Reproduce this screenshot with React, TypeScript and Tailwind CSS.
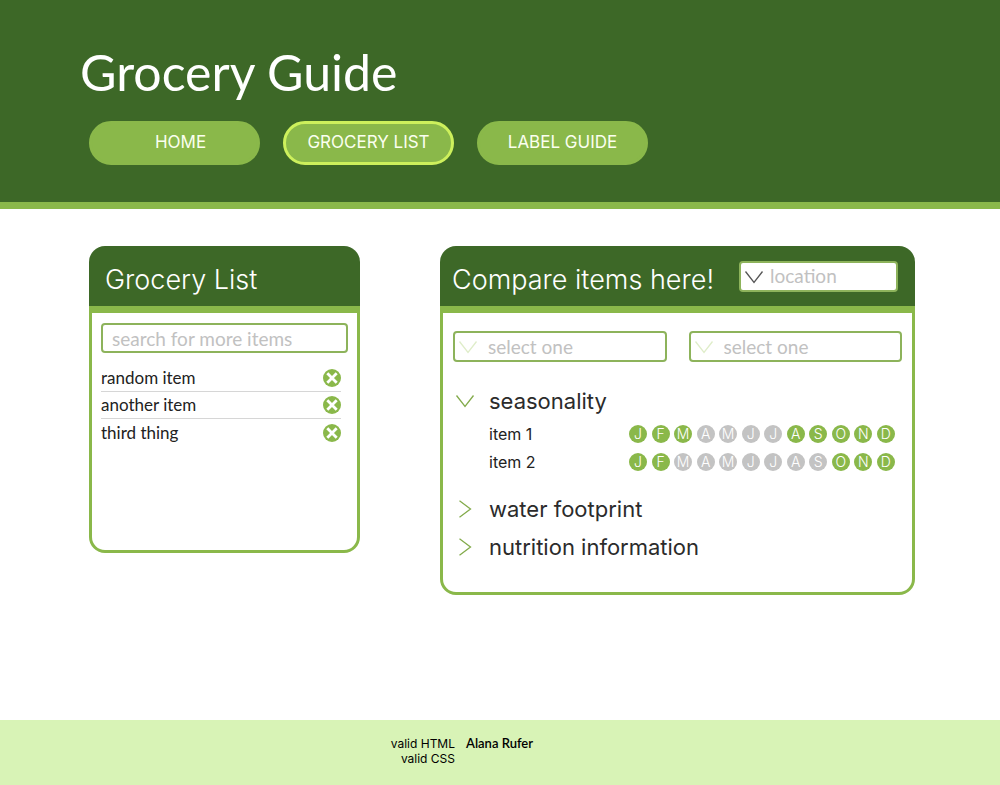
import { useState } from "react";

const INTER = "font-['Inter','Liberation_Sans',sans-serif]";

const MONTHS = ["J", "F", "M", "A", "M", "J", "J", "A", "S", "O", "N", "D"];

const SEASONS = [
  { name: "item 1", active: [0, 1, 2, 7, 8, 9, 10, 11] },
  { name: "item 2", active: [0, 1, 9, 10, 11] },
];

const NAV = [
  { label: "HOME", style: "border-[#8ab84a] pl-3" },
  { label: "GROCERY LIST", style: "border-[#cdf05c]" },
  { label: "LABEL GUIDE", style: "border-[#8ab84a]" },
];

function Chevron({ className, open = true }: { className: string; open?: boolean }) {
  return (
    <svg
      viewBox="0 0 20 20"
      aria-hidden="true"
      className={`size-5 shrink-0 ${className}`}
      fill="none"
      stroke="currentColor"
      strokeWidth="1.3"
    >
      <path d={open ? "M1.5 4.500 L10 15.500 L18.500 4.500" : "M4.500 1.800 L15.500 10 L4.500 18.200"} />
    </svg>
  );
}

function Picker({
  label,
  text,
  chevron,
  className,
}: {
  label: string;
  text: string;
  chevron: string;
  className: string;
}) {
  return (
    <div className={`relative ${className}`}>
      <select
        aria-label={label}
        className="block h-full w-full appearance-none rounded border-2 border-[#8db35b] bg-white text-[19px] leading-6 text-[#c1c1c1]"
      >
        <option>{text}</option>
      </select>
      <Chevron className={`pointer-events-none absolute left-[5px] top-1.5 ${chevron}`} />
    </div>
  );
}

function Section({
  title,
  open,
  onToggle,
}: {
  title: string;
  open: boolean;
  onToggle: () => void;
}) {
  return (
    <button
      type="button"
      aria-expanded={open}
      onClick={onToggle}
      className={`flex h-8 items-center gap-3.5 text-[22px] text-[#2b2b2b] ${INTER}`}
    >
      <Chevron open={open} className="text-[#83ab4b]" />
      {title}
    </button>
  );
}

export default function App() {
  const [items, setItems] = useState(["random item", "another item", "third thing"]);
  const [open, setOpen] = useState("seasonality");
  const toggle = (name: string) => setOpen(open === name ? "" : name);

  return (
    <div className="flex min-h-screen flex-col bg-white font-['Lato','Liberation_Sans',sans-serif] text-[#222]">
      <header className="border-b-[7px] border-[#8ab84a] bg-[#3d6827] px-20 pb-[37px] pt-10">
        <h1 className="text-[50px] leading-[64px] text-white">Grocery Guide</h1>
        <nav className={`flex flex-wrap gap-[23px] pl-[9px] pt-[17px] ${INTER}`}>
          {NAV.map((item) => (
            <a
              key={item.label}
              href="#"
              className={`flex h-11 w-[171px] items-center justify-center rounded-[22px] border-3 bg-[#8ab84a] text-[17px] text-[#fbffef] ${item.style}`}
            >
              {item.label}
            </a>
          ))}
        </nav>
      </header>

      <main className="grid flex-1 grid-cols-[271fr_475fr] items-start gap-20 pb-28 pl-[89px] pr-[85px] pt-[37px]">
        <section className="flex min-h-[307px] flex-col">
          <h2
            className={`flex h-[60px] items-center rounded-t-2xl bg-[#3d6827] px-4 pt-2 text-[27px] font-light text-white ${INTER}`}
          >
            Grocery List
          </h2>
          <div className="flex-1 rounded-b-2xl border-3 border-t-[7px] border-[#8ab84a] bg-white px-[9px] pt-2.5">
            <input
              type="text"
              aria-label="Search for more items"
              placeholder="search for more items"
              className="block h-[30px] w-full rounded border-2 border-[#8db35b] px-[9px] text-[19px] leading-6 placeholder:text-[#c1c1c1]"
            />
            <ul className="mt-3 divide-y divide-[#d6d6d6] pr-[7px]">
              {items.map((item) => (
                <li key={item} className="flex h-[27px] items-center justify-between text-[17px]">
                  {item}
                  <button
                    type="button"
                    aria-label={`Remove ${item}`}
                    onClick={() => setItems(items.filter((other) => other !== item))}
                  >
                    <svg viewBox="0 0 18 18" className="size-[18px]" aria-hidden="true">
                      <circle cx="9" cy="9" r="9" fill="#8ab84a" />
                      <path d="M4.300 4.300 L13.700 13.700 M13.700 4.300 L4.300 13.700" stroke="#fff" strokeWidth="2.800" />
                    </svg>
                  </button>
                </li>
              ))}
            </ul>
          </div>
        </section>

        <section className="flex min-h-[349px] flex-col">
          <div className="flex h-[60px] items-center justify-between rounded-t-2xl bg-[#3d6827] pl-3 pr-[17px]">
            <h2 className={`whitespace-nowrap pt-2 text-[27px] font-light text-white ${INTER}`}>
              Compare items here!
            </h2>
            <Picker
              label="Location"
              text="location"
              chevron="text-[#555]"
              className="h-[31px] w-[159px] [&>select]:pl-[29px]"
            />
          </div>
          <div className="flex-1 rounded-b-2xl border-3 border-t-[7px] border-[#8ab84a] bg-white px-2.5 pb-7 pt-[18px]">
            <div className="grid grid-cols-2 gap-[22px]">
              <Picker
                label="First item"
                text="select one"
                chevron="text-[#dfedc9]"
                className="h-[31px] [&>select]:pl-[33px]"
              />
              <Picker
                label="Second item"
                text="select one"
                chevron="text-[#dfedc9]"
                className="h-[31px] [&>select]:pl-[33px]"
              />
            </div>

            <div className="pl-0.5 pt-[23px]">
              <Section
                title="seasonality"
                open={open === "seasonality"}
                onToggle={() => toggle("seasonality")}
              />
              {open === "seasonality" && (
                <ul className="pb-[17px] pl-[34px] pr-[7px] pt-[3px]">
                  {SEASONS.map((season) => (
                    <li
                      key={season.name}
                      className={`flex h-7 items-center justify-between text-base ${INTER}`}
                    >
                      {season.name}
                      <ol className="flex w-[266px] justify-between">
                        {MONTHS.map((month, index) => (
                          <li
                            key={index}
                            className={`flex size-[18px] items-center justify-center rounded-full text-sm font-light text-white ${
                              season.active.includes(index) ? "bg-[#8ab84a]" : "bg-[#c3c3c3]"
                            }`}
                          >
                            {month}
                          </li>
                        ))}
                      </ol>
                    </li>
                  ))}
                </ul>
              )}
              <div className="flex flex-col gap-1.5">
                <Section
                  title="water footprint"
                  open={open === "water"}
                  onToggle={() => toggle("water")}
                />
                <Section
                  title="nutrition information"
                  open={open === "nutrition"}
                  onToggle={() => toggle("nutrition")}
                />
              </div>
            </div>
          </div>
        </section>
      </main>

      <footer className="flex gap-[11px] bg-[#d8f3b6] pb-[19px] pt-4 text-xs leading-[15px] text-black">
        <div className={`flex w-[45.5%] flex-col items-end ${INTER}`}>
          <a href="#">valid HTML</a>
          <a href="#">valid CSS</a>
        </div>
        <p className="text-[13px] font-semibold">Alana Rufer</p>
      </footer>
    </div>
  );
}
